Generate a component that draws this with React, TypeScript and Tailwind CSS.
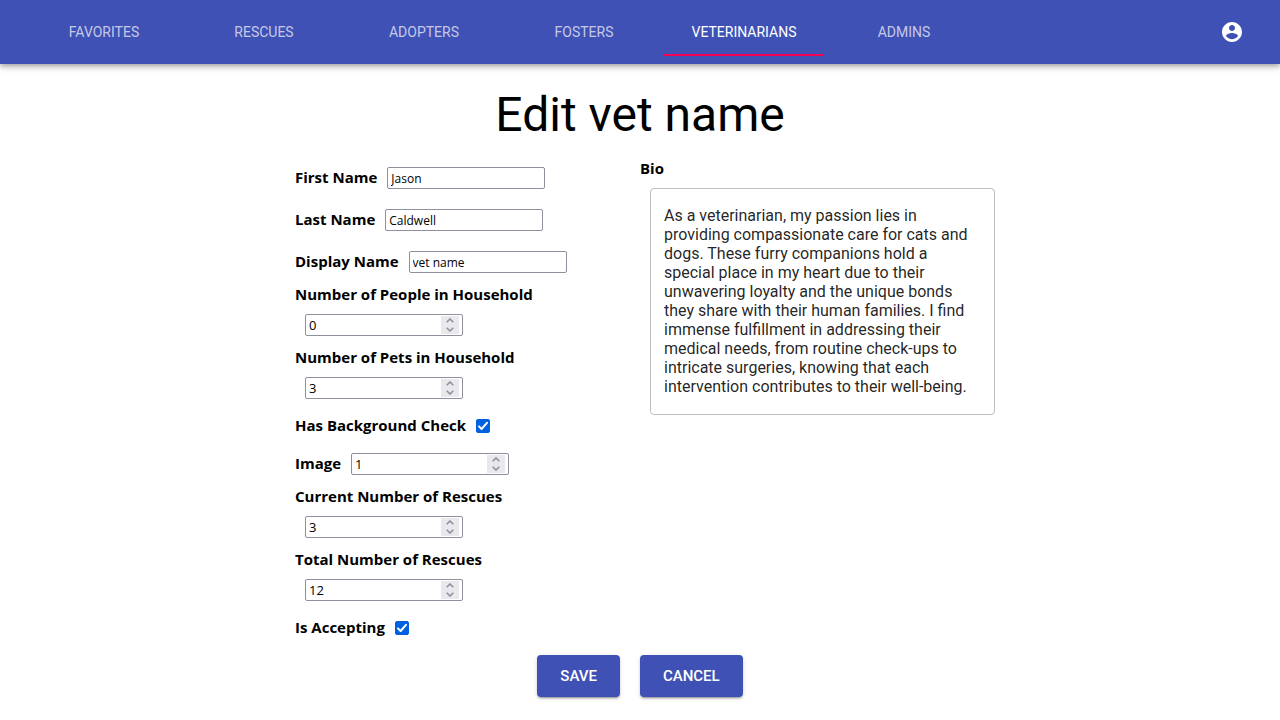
import { useId, useState } from "react";

const tabs = ["Favorites", "Rescues", "Adopters", "Fosters", "Veterinarians", "Admins"];

const bioText =
  "As a veterinarian, my passion lies in providing compassionate care for cats and dogs. These furry companions hold a special place in my heart due to their unwavering loyalty and the unique bonds they share with their human families. I find immense fulfillment in addressing their medical needs, from routine check-ups to intricate surgeries, knowing that each intervention contributes to their well-being.";

function Header() {
  const [active, setActive] = useState("Veterinarians");
  return (
    <header className="flex h-16 items-center justify-between bg-[#3f51b5] px-6 text-white shadow-[0_2px_4px_-1px_rgba(0,0,0,0.2),0_4px_5px_0_rgba(0,0,0,0.14),0_1px_10px_0_rgba(0,0,0,0.12)]">
      <nav className="flex">
        {tabs.map((tab) => (
          <button
            key={tab}
            type="button"
            onClick={() => setActive(tab)}
            className={
              tab === active
                ? "h-12 w-40 border-b-2 border-[#f50057] pt-0.5 text-sm uppercase"
                : "h-12 w-40 border-b-2 border-transparent pt-0.5 text-sm text-white/70 uppercase"
            }
          >
            {tab}
          </button>
        ))}
      </nav>
      <button type="button" aria-label="Account" className="p-3">
        <svg viewBox="0 0 24 24" className="size-6 fill-current" aria-hidden="true">
          <path d="M12 2C6.48 2 2 6.48 2 12s4.48 10 10 10 10-4.48 10-10S17.52 2 12 2zm0 3c1.66 0 3 1.34 3 3s-1.34 3-3 3-3-1.34-3-3 1.34-3 3-3zm0 14.2c-2.5 0-4.71-1.28-6-3.22.03-1.99 4-3.08 6-3.08 1.99 0 5.97 1.09 6 3.08-1.29 1.94-3.5 3.22-6 3.22z" />
        </svg>
      </button>
    </header>
  );
}

function TextField({ label, initial }: { label: string; initial: string }) {
  const id = useId();
  return (
    <div className="flex items-center gap-2.5 py-2.5">
      <label htmlFor={id} className="pb-0.5">
        {label}
      </label>
      <input
        id={id}
        type="text"
        defaultValue={initial}
        className="h-[22px] w-[158px] rounded-xs border border-[#8f8f9d] bg-white px-[3px] text-xs font-normal"
      />
    </div>
  );
}

function NumberField({ label, initial, stacked = false }: { label: string; initial: number; stacked?: boolean }) {
  const id = useId();
  const [value, setValue] = useState(initial);
  return (
    <div className={stacked ? "flex flex-col" : "flex items-center gap-2.5 py-2.5"}>
      <label htmlFor={id} className={stacked ? "pt-px" : "pb-0.5"}>
        {label}
      </label>
      <div
        className={
          stacked
            ? "m-2.5 flex h-[22px] w-[158px] rounded-xs border border-[#8f8f9d] bg-white pr-[3px]"
            : "flex h-[22px] w-[158px] rounded-xs border border-[#8f8f9d] bg-white pr-[3px]"
        }
      >
        <input
          id={id}
          type="number"
          value={value}
          onChange={(e) => setValue(Number(e.target.value))}
          className="min-w-0 flex-1 [appearance:textfield] px-[3px] text-[13px] font-normal text-black outline-none [&::-webkit-inner-spin-button]:appearance-none"
        />
        <div className="my-px flex w-[18px] flex-col bg-[#e9e9ed] text-[#8f8f9d]">
          <button type="button" aria-label={`Increase ${label}`} onClick={() => setValue(value + 1)} className="flex flex-1 items-center justify-center">
            <svg viewBox="0 0 8 5" className="h-[5px] w-2 fill-none stroke-current stroke-[1.6]">
              <path d="M0.7 4.2 4 1l3.3 3.2" />
            </svg>
          </button>
          <button type="button" aria-label={`Decrease ${label}`} onClick={() => setValue(value - 1)} className="flex flex-1 items-center justify-center">
            <svg viewBox="0 0 8 5" className="h-[5px] w-2 fill-none stroke-current stroke-[1.6]">
              <path d="M0.7 0.8 4 4l3.3-3.2" />
            </svg>
          </button>
        </div>
      </div>
    </div>
  );
}

function CheckField({ label }: { label: string }) {
  const id = useId();
  return (
    <div className="flex h-[34px] items-center gap-2.5">
      <label htmlFor={id} className="pb-0.5">
        {label}
      </label>
      <span className="grid size-3.5">
        <input
          id={id}
          type="checkbox"
          defaultChecked
          className="peer col-start-1 row-start-1 size-3.5 appearance-none rounded-xs border border-[#8f8f9d] bg-white checked:border-[#0061e0] checked:bg-[#0061e0]"
        />
        <svg
          viewBox="0 0 14 14"
          className="pointer-events-none invisible col-start-1 row-start-1 size-3.5 fill-none stroke-white stroke-2 peer-checked:visible"
        >
          <path d="M3 7.4 5.6 10 11 3.8" strokeLinecap="round" strokeLinejoin="round" />
        </svg>
      </span>
    </div>
  );
}

function ActionButton({ children, type }: { children: string; type: "submit" | "button" }) {
  return (
    <button
      type={type}
      className="h-[42px] rounded-sm bg-[#3f51b5] px-[23px] font-[Roboto,sans-serif] text-[15px] font-medium text-white uppercase shadow-[0_3px_1px_-2px_rgba(0,0,0,0.2),0_2px_2px_0_rgba(0,0,0,0.14),0_1px_5px_0_rgba(0,0,0,0.12)]"
    >
      {children}
    </button>
  );
}

export default function App() {
  return (
    <div className="min-h-screen bg-white font-[Roboto,sans-serif] text-black">
      <Header />
      <main className="px-4 pt-[23px] pb-4">
        <h1 className="text-center text-5xl leading-[56px]">Edit vet name</h1>
        <form
          onSubmit={(e) => e.preventDefault()}
          className="mx-auto mt-3.5 max-w-[690px] font-['Open_Sans','Noto_Sans',sans-serif] text-[15px] leading-5 font-bold"
        >
          <div className="grid grid-cols-2">
            <div className="flex flex-col">
              <TextField label="First Name" initial="Jason" />
              <TextField label="Last Name" initial="Caldwell" />
              <TextField label="Display Name" initial="vet name" />
              <NumberField label="Number of People in Household" initial={0} stacked />
              <NumberField label="Number of Pets in Household" initial={3} stacked />
              <CheckField label="Has Background Check" />
              <NumberField label="Image" initial={1} />
              <NumberField label="Current Number of Rescues" initial={3} stacked />
              <NumberField label="Total Number of Rescues" initial={12} stacked />
              <CheckField label="Is Accepting" />
            </div>
            <div className="-mr-2.5 flex flex-col">
              <label htmlFor="bio" className="pt-px">
                Bio
              </label>
              <textarea
                id="bio"
                rows={10}
                defaultValue={bioText}
                className="mt-2.5 ml-2.5 resize-none overflow-hidden rounded-sm border border-black/25 px-[13px] pt-[17px] pb-[18px] font-[Roboto,sans-serif] text-base leading-[19px] font-normal text-black/87"
              />
            </div>
          </div>
          <div className="flex justify-center gap-5 pt-2.5">
            <ActionButton type="submit">Save</ActionButton>
            <ActionButton type="button">Cancel</ActionButton>
          </div>
        </form>
      </main>
    </div>
  );
}
